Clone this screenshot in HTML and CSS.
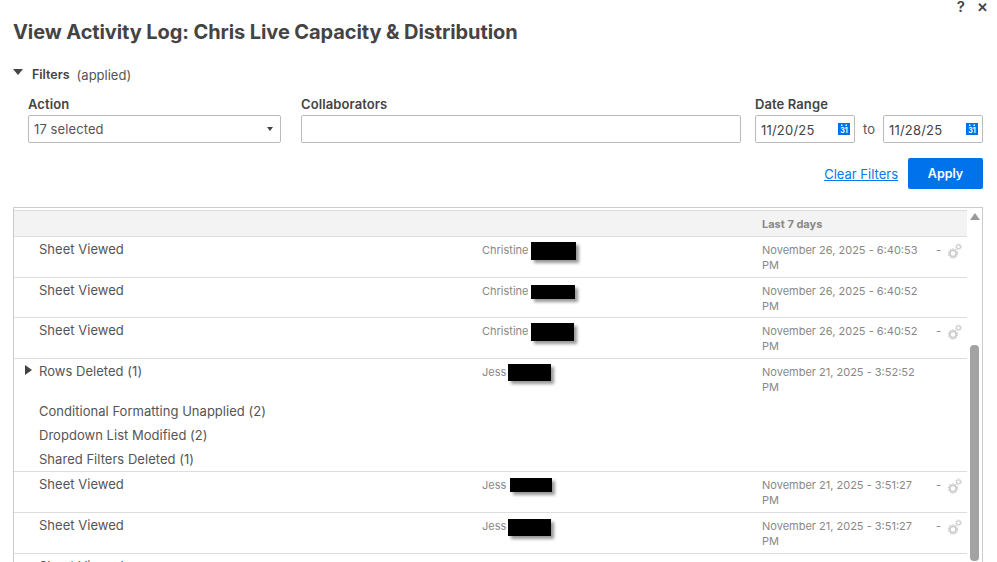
FILE: index.html
```html
<!DOCTYPE html>
<html lang="en">
<head>
<meta charset="utf-8">
<title>View Activity Log</title>
<link rel="stylesheet" href="styles.css">
</head>
<body>
<svg width="0" height="0" class="defs">
  <symbol id="gears" viewBox="0 0 14 16">
    <g fill="none" stroke="#cfcfcf">
      <circle cx="5" cy="10.5" r="3.2" stroke-width="2"/>
      <circle cx="5" cy="10.5" r="4.6" stroke-width="1.2" stroke-dasharray="1.6 1.3"/>
      <circle cx="10.5" cy="3.8" r="2" stroke-width="1.2"/>
      <circle cx="10.5" cy="3.8" r="3" stroke-width=".8" stroke-dasharray="1 1"/>
    </g>
  </symbol>
  <symbol id="cal" viewBox="0 0 12 12">
    <rect width="12" height="12" fill="#0073ec"/>
    <rect x="3" y="1.5" width="1.5" height="1.5" fill="#fff"/>
    <rect x="7.5" y="1.5" width="1.5" height="1.5" fill="#fff"/>
  </symbol>
</svg>
<div class="dialog">
  <div class="window-tools"><span class="help">?</span><span class="close">✕</span></div>
  <h1 class="title">View Activity Log: Chris Live Capacity &amp; Distribution</h1>
  <div class="filters-toggle">
    <span class="tri-down"></span><b>Filters</b><span class="applied">(applied)</span>
  </div>
  <div class="filters">
    <div class="field action">
      <label>Action</label>
      <div class="input select"><span>17 selected</span><span class="caret"></span></div>
    </div>
    <div class="field collab">
      <label>Collaborators</label>
      <div class="input"></div>
    </div>
    <div class="field dates">
      <label>Date Range</label>
      <div class="date-row">
        <div class="input date"><span class="date-text">11/20/25</span><span class="cal"><svg width="12" height="12"><use href="#cal"/></svg><i>31</i></span></div>
        <span class="to">to</span>
        <div class="input date"><span class="date-text">11/28/25</span><span class="cal"><svg width="12" height="12"><use href="#cal"/></svg><i>31</i></span></div>
      </div>
    </div>
  </div>
  <div class="actions">
    <a class="clear" href="#">Clear Filters</a>
    <button class="apply">Apply</button>
  </div>
  <div class="log">
    <div class="log-table">
      <div class="log-head"><span>Last 7 days</span></div>
      <div class="row h41">
        <div class="c-action"><div>Sheet Viewed</div></div>
        <div class="c-user"><span>Christine</span><span class="redact r1"></span></div>
        <div class="c-date">November 26, 2025 - 6:40:53 PM</div>
        <div class="c-extra">-<svg class="gears" width="14" height="16"><use href="#gears"/></svg></div>
      </div>
      <div class="row h40">
        <div class="c-action"><div>Sheet Viewed</div></div>
        <div class="c-user"><span>Christine</span><span class="redact r2"></span></div>
        <div class="c-date">November 26, 2025 - 6:40:52 PM</div>
        <div class="c-extra"></div>
      </div>
      <div class="row h41">
        <div class="c-action"><div>Sheet Viewed</div></div>
        <div class="c-user"><span>Christine</span><span class="redact r3"></span></div>
        <div class="c-date">November 26, 2025 - 6:40:52 PM</div>
        <div class="c-extra">-<svg class="gears" width="14" height="16"><use href="#gears"/></svg></div>
      </div>
      <div class="row h113">
        <div class="c-action expandable">
          <span class="tri-right"></span>
          <div class="first">Rows Deleted (1)</div>
          <div class="sub">Conditional Formatting Unapplied (2)</div>
          <div class="sub">Dropdown List Modified (2)</div>
          <div class="sub">Shared Filters Deleted (1)</div>
        </div>
        <div class="c-user"><span>Jess</span><span class="redact r4"></span></div>
        <div class="c-date">November 21, 2025 - 3:52:52 PM</div>
        <div class="c-extra"></div>
      </div>
      <div class="row h41">
        <div class="c-action"><div>Sheet Viewed</div></div>
        <div class="c-user"><span>Jess</span><span class="redact r5"></span></div>
        <div class="c-date">November 21, 2025 - 3:51:27 PM</div>
        <div class="c-extra">-<svg class="gears" width="14" height="16"><use href="#gears"/></svg></div>
      </div>
      <div class="row h41">
        <div class="c-action"><div>Sheet Viewed</div></div>
        <div class="c-user"><span>Jess</span><span class="redact r6"></span></div>
        <div class="c-date">November 21, 2025 - 3:51:27 PM</div>
        <div class="c-extra">-<svg class="gears" width="14" height="16"><use href="#gears"/></svg></div>
      </div>
      <div class="row h41">
        <div class="c-action"><div>Sheet Viewed</div></div>
        <div class="c-user"></div>
        <div class="c-date"></div>
        <div class="c-extra"></div>
      </div>
    </div>
    <div class="scrollbar">
      <span class="arrow-up"></span>
      <span class="thumb"></span>
    </div>
  </div>
</div>
</body>
</html>
```
FILE: styles.css
```css
* { box-sizing: border-box; }
html, body { margin: 0; padding: 0; height: 562px; overflow: hidden; background: #fff; }
body { font-family: Inter, "Liberation Sans", sans-serif; color: #444; font-size: 13px; }
.defs { position: absolute; }
.dialog { height: 562px; padding: 0 14px 0 13px; overflow: hidden; }

.window-tools { height: 14px; display: flex; justify-content: flex-end; align-items: center; gap: 12px; color: #444; font-weight: 600; line-height: 14px; margin-right: -5px; }
.help { font-size: 15px; }
.close { font-size: 13px; }

.title { margin: 6px 0 0; height: 24px; font-size: 20px; line-height: 24px; font-weight: 700; color: #444; letter-spacing: -0.095px; }

.filters-toggle { margin-top: 22px; height: 18px; display: flex; align-items: center; font-size: 13px; line-height: 18px; color: #444; }
.filters-toggle b { font-weight: 600; margin-left: 9px; font-size: 12.5px; }
.applied { margin-left: 7px; color: #555; }
.tri-down { width: 0; height: 0; border-left: 5px solid transparent; border-right: 5px solid transparent; border-top: 6px solid #444; margin-top: -6px; }

.filters { display: flex; padding-left: 15px; margin-top: 12px; }
.field label { display: block; font-weight: 600; font-size: 13px; line-height: 16px; height: 16px; color: #444; margin-bottom: 3px; letter-spacing: .1px; }
.action { width: 253px; margin-right: 20px; }
.collab { width: 440px; margin-right: 14px; }
.dates { width: 228px; }
.input { height: 28px; border: 1px solid #bbb; border-radius: 2px; background: #fff; display: flex; align-items: center; padding: 0 5px; font-size: 13px; color: #555; letter-spacing: .1px; }
.select { justify-content: space-between; }
.caret { width: 0; height: 0; border-left: 3px solid transparent; border-right: 3px solid transparent; border-top: 4px solid #444; margin-right: 2px; }
.date-row { display: flex; align-items: center; }
.date { width: 100px; justify-content: space-between; color: #444; letter-spacing: .2px; }
.date-text { padding-top: 2px; }
.to { width: 28px; text-align: center; color: #555; }
.cal { position: relative; width: 12px; height: 12px; display: block; margin-right: -1px; }
.cal svg { display: block; }
.cal i { position: absolute; left: 0; right: 0; top: 4px; text-align: center; font-style: normal; font-size: 7px; line-height: 8px; font-weight: 700; color: #fff; letter-spacing: 0; }

.actions { display: flex; justify-content: flex-end; align-items: center; gap: 10px; margin-top: 15px; }
.clear { color: #0a78e8; font-size: 13px; text-decoration: underline; padding-top: 1px; }
.apply { width: 75px; height: 31px; border: 0; border-radius: 2px; background: #0073ec; color: #fff; font: 600 12.5px Inter, sans-serif; padding: 0 0 1px; }

.log { display: flex; margin-top: 18px; height: 400px; border: 1px solid #ccc; border-width: 1px 1px 0 1px; padding-top: 2px; }
.log-table { flex: 0 0 953px; }
.log-head { height: 27px; background: #f3f3f3; border-top: 1px solid #ddd; border-bottom: 1px solid #ddd; padding-left: 748px; font-size: 11px; font-weight: 700; color: #888; line-height: 26px; }
.row { display: flex; border-bottom: 1px solid #ddd; overflow: hidden; }
.h41 { height: 41px; }
.h40 { height: 40px; }
.h113 { height: 113px; }
.c-action { width: 468px; padding: 4px 0 0 25px; font-size: 13px; line-height: 16px; color: #555; letter-spacing: .03px; position: relative; }
.tri-right { position: absolute; left: 11px; top: 6px; width: 0; height: 0; border-top: 5px solid transparent; border-bottom: 5px solid transparent; border-left: 7px solid #444; }
.first { height: 40px; }
.sub { height: 24px; }
.c-user { width: 280px; padding-top: 6px; display: flex; align-items: flex-start; font-size: 11px; line-height: 14px; color: #888; }
.c-date { width: 163px; padding: 6px 0 0; font-size: 11px; line-height: 15px; color: #888; }
.c-extra { flex: 1; display: flex; align-items: flex-start; padding: 6px 0 0 11px; font-size: 11px; line-height: 14px; color: #888; position: relative; }
.gears { margin: 0 0 0 7px; }
.redact { display: block; background: #000; box-shadow: 3px 3px 3px #999; }
.r1 { width: 45px; height: 18px; margin: -1px 0 0 2px; }
.r2 { width: 44px; height: 14px; margin: 1px 0 0 2px; }
.r3 { width: 43px; height: 18px; margin: -1px 0 0 2px; }
.r4 { width: 43px; height: 17px; margin: -1px 0 0 2px; }
.r5 { width: 42px; height: 14px; margin: 0 0 0 4px; }
.r6 { width: 43px; height: 17px; margin: 0 0 0 2px; }

.scrollbar { position: relative; flex: 1; }
.arrow-up { position: absolute; left: 3px; top: 3px; width: 0; height: 0; border-left: 5px solid transparent; border-right: 5px solid transparent; border-bottom: 7px solid #999; }
.thumb { position: absolute; left: 3px; top: 135px; width: 9px; height: 216px; background: #a3a3a3; border-radius: 4px; }
```
